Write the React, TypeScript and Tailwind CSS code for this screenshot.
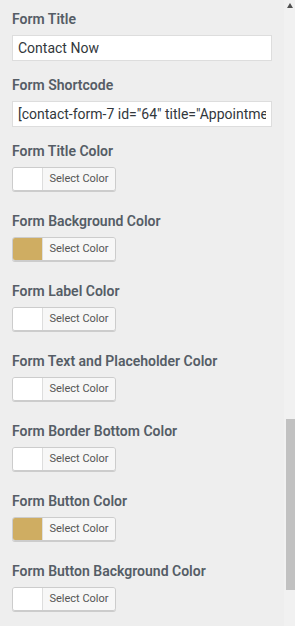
import React from 'react';

// カスタマイザー風のフォーム設定パネル
const colorFields = [
  { label: 'Form Title Color', color: '#ffffff' },
  { label: 'Form Background Color', color: '#cfad62' },
  { label: 'Form Label Color', color: '#ffffff' },
  { label: 'Form Text and Placeholder Color', color: '#ffffff' },
  { label: 'Form Border Bottom Color', color: '#ffffff' },
  { label: 'Form Button Color', color: '#cfad62' },
  { label: 'Form Button Background Color', color: '#ffffff' },
];

function Label({ children }: { children: React.ReactNode }) {
  return (
    <div className="mb-[6px] text-[14px] leading-[20px] font-semibold text-[#555d66]">{children}</div>
  );
}

function ColorButton({ color }: { color: string }) {
  return (
    <div className="flex h-[24px] w-[104px] overflow-hidden rounded-[3px] border border-[#ccc] shadow-[0_1px_0_#ccc]">
      <div className="w-[30px] border-r border-[#ddd]" style={{ backgroundColor: color }} />
      <div className="flex flex-1 items-center justify-center bg-[#f7f7f7] text-[11px] text-[#555]">
        Select Color
      </div>
    </div>
  );
}

export default function App() {
  return (
    <div
      className="flex h-[626px] w-[295px] overflow-hidden bg-[#eeeeee]"
      style={{ fontFamily: 'Roboto, "Liberation Sans", sans-serif' }}
    >
      {/* 設定項目 */}
      <div className="flex-1 pl-[12px] pr-[12px] pt-[9px]">
        <div className="mb-[14px]">
          <Label>Form Title</Label>
          <input
            readOnly
            value="Contact Now"
            className="h-[26px] w-[260px] border border-[#ddd] bg-white px-[5px] text-[14px] text-[#32373c] outline-none"
          />
        </div>
        <div className="mb-[14px]">
          <Label>Form Shortcode</Label>
          <input
            readOnly
            value={'[contact-form-7 id="64" title="Appointment"]'}
            className="h-[26px] w-[260px] border border-[#ddd] bg-white px-[5px] text-[14px] text-[#32373c] outline-none"
          />
        </div>
        {colorFields.map((f) => (
          <div key={f.label} className="mb-[20px]">
            <Label>{f.label}</Label>
            <ColorButton color={f.color} />
          </div>
        ))}
      </div>
      {/* スクロールバー */}
      <div className="flex w-[11px] flex-col bg-[#f1f1f1]">
        <div className="flex h-[10px] items-center justify-center">
          <div className="h-0 w-0 border-x-[3.5px] border-b-[5px] border-x-transparent border-b-[#505050]" />
        </div>
        <div className="ml-[2px] mt-[409px] h-[171px] bg-[#c1c1c1]" />
      </div>
    </div>
  );
}
